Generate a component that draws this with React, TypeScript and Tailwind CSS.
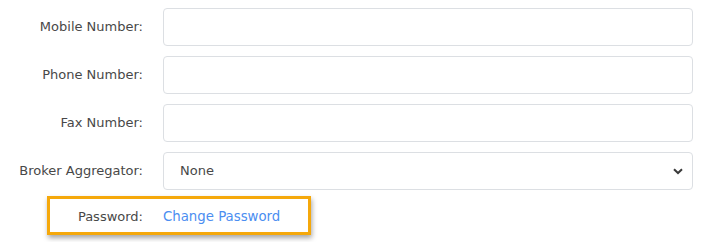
import React from "react";

const font = { fontFamily: '"DejaVu Sans", sans-serif' };

function Row({ label, children }: { label: string; children: React.ReactNode }) {
  return (
    <div className="flex items-center h-[38px]">
      <div className="w-[143px] shrink-0 text-right text-[#484848] text-[13px]">{label}</div>
      <div className="ml-[20px] w-[530px]">{children}</div>
    </div>
  );
}

export default function App() {
  return (
    <div className="w-[717px] h-[242px] bg-white pt-[8px] flex flex-col gap-[10px]" style={font}>
      <Row label="Mobile Number:">
        <input className="w-full h-[38px] border border-[#dcdfe3] rounded-[4px] outline-none" />
      </Row>
      <Row label="Phone Number:">
        <input className="w-full h-[38px] border border-[#dcdfe3] rounded-[4px] outline-none" />
      </Row>
      <Row label="Fax Number:">
        <input className="w-full h-[38px] border border-[#dcdfe3] rounded-[4px] outline-none" />
      </Row>
      <Row label="Broker Aggregator:">
        <div className="relative w-full h-[38px] border border-[#dcdfe3] rounded-[4px] flex items-center pl-[16px] text-[13px] text-[#484848]">
          None
          <svg className="absolute right-[9px] top-[15px]" width="10" height="7" viewBox="0 0 10 7">
            <path d="M1 1.2 L5 5 L9 1.2" fill="none" stroke="#3a3a3a" strokeWidth="2" />
          </svg>
        </div>
      </Row>
      <div className="relative flex items-center h-[38px] -mt-[2px]">
        <div className="w-[143px] shrink-0 text-right text-[#484848] text-[13px]">Password:</div>
        <a className="ml-[20px] text-[13.3px] text-[#4b8ef1]">Change Password</a>
        <div className="absolute left-[47px] -top-[2px] w-[264px] h-[39px] border-[3px] border-[#f5a80b] shadow-[1px_3px_5px_rgba(0,0,0,0.35)]" />
      </div>
    </div>
  );
}
